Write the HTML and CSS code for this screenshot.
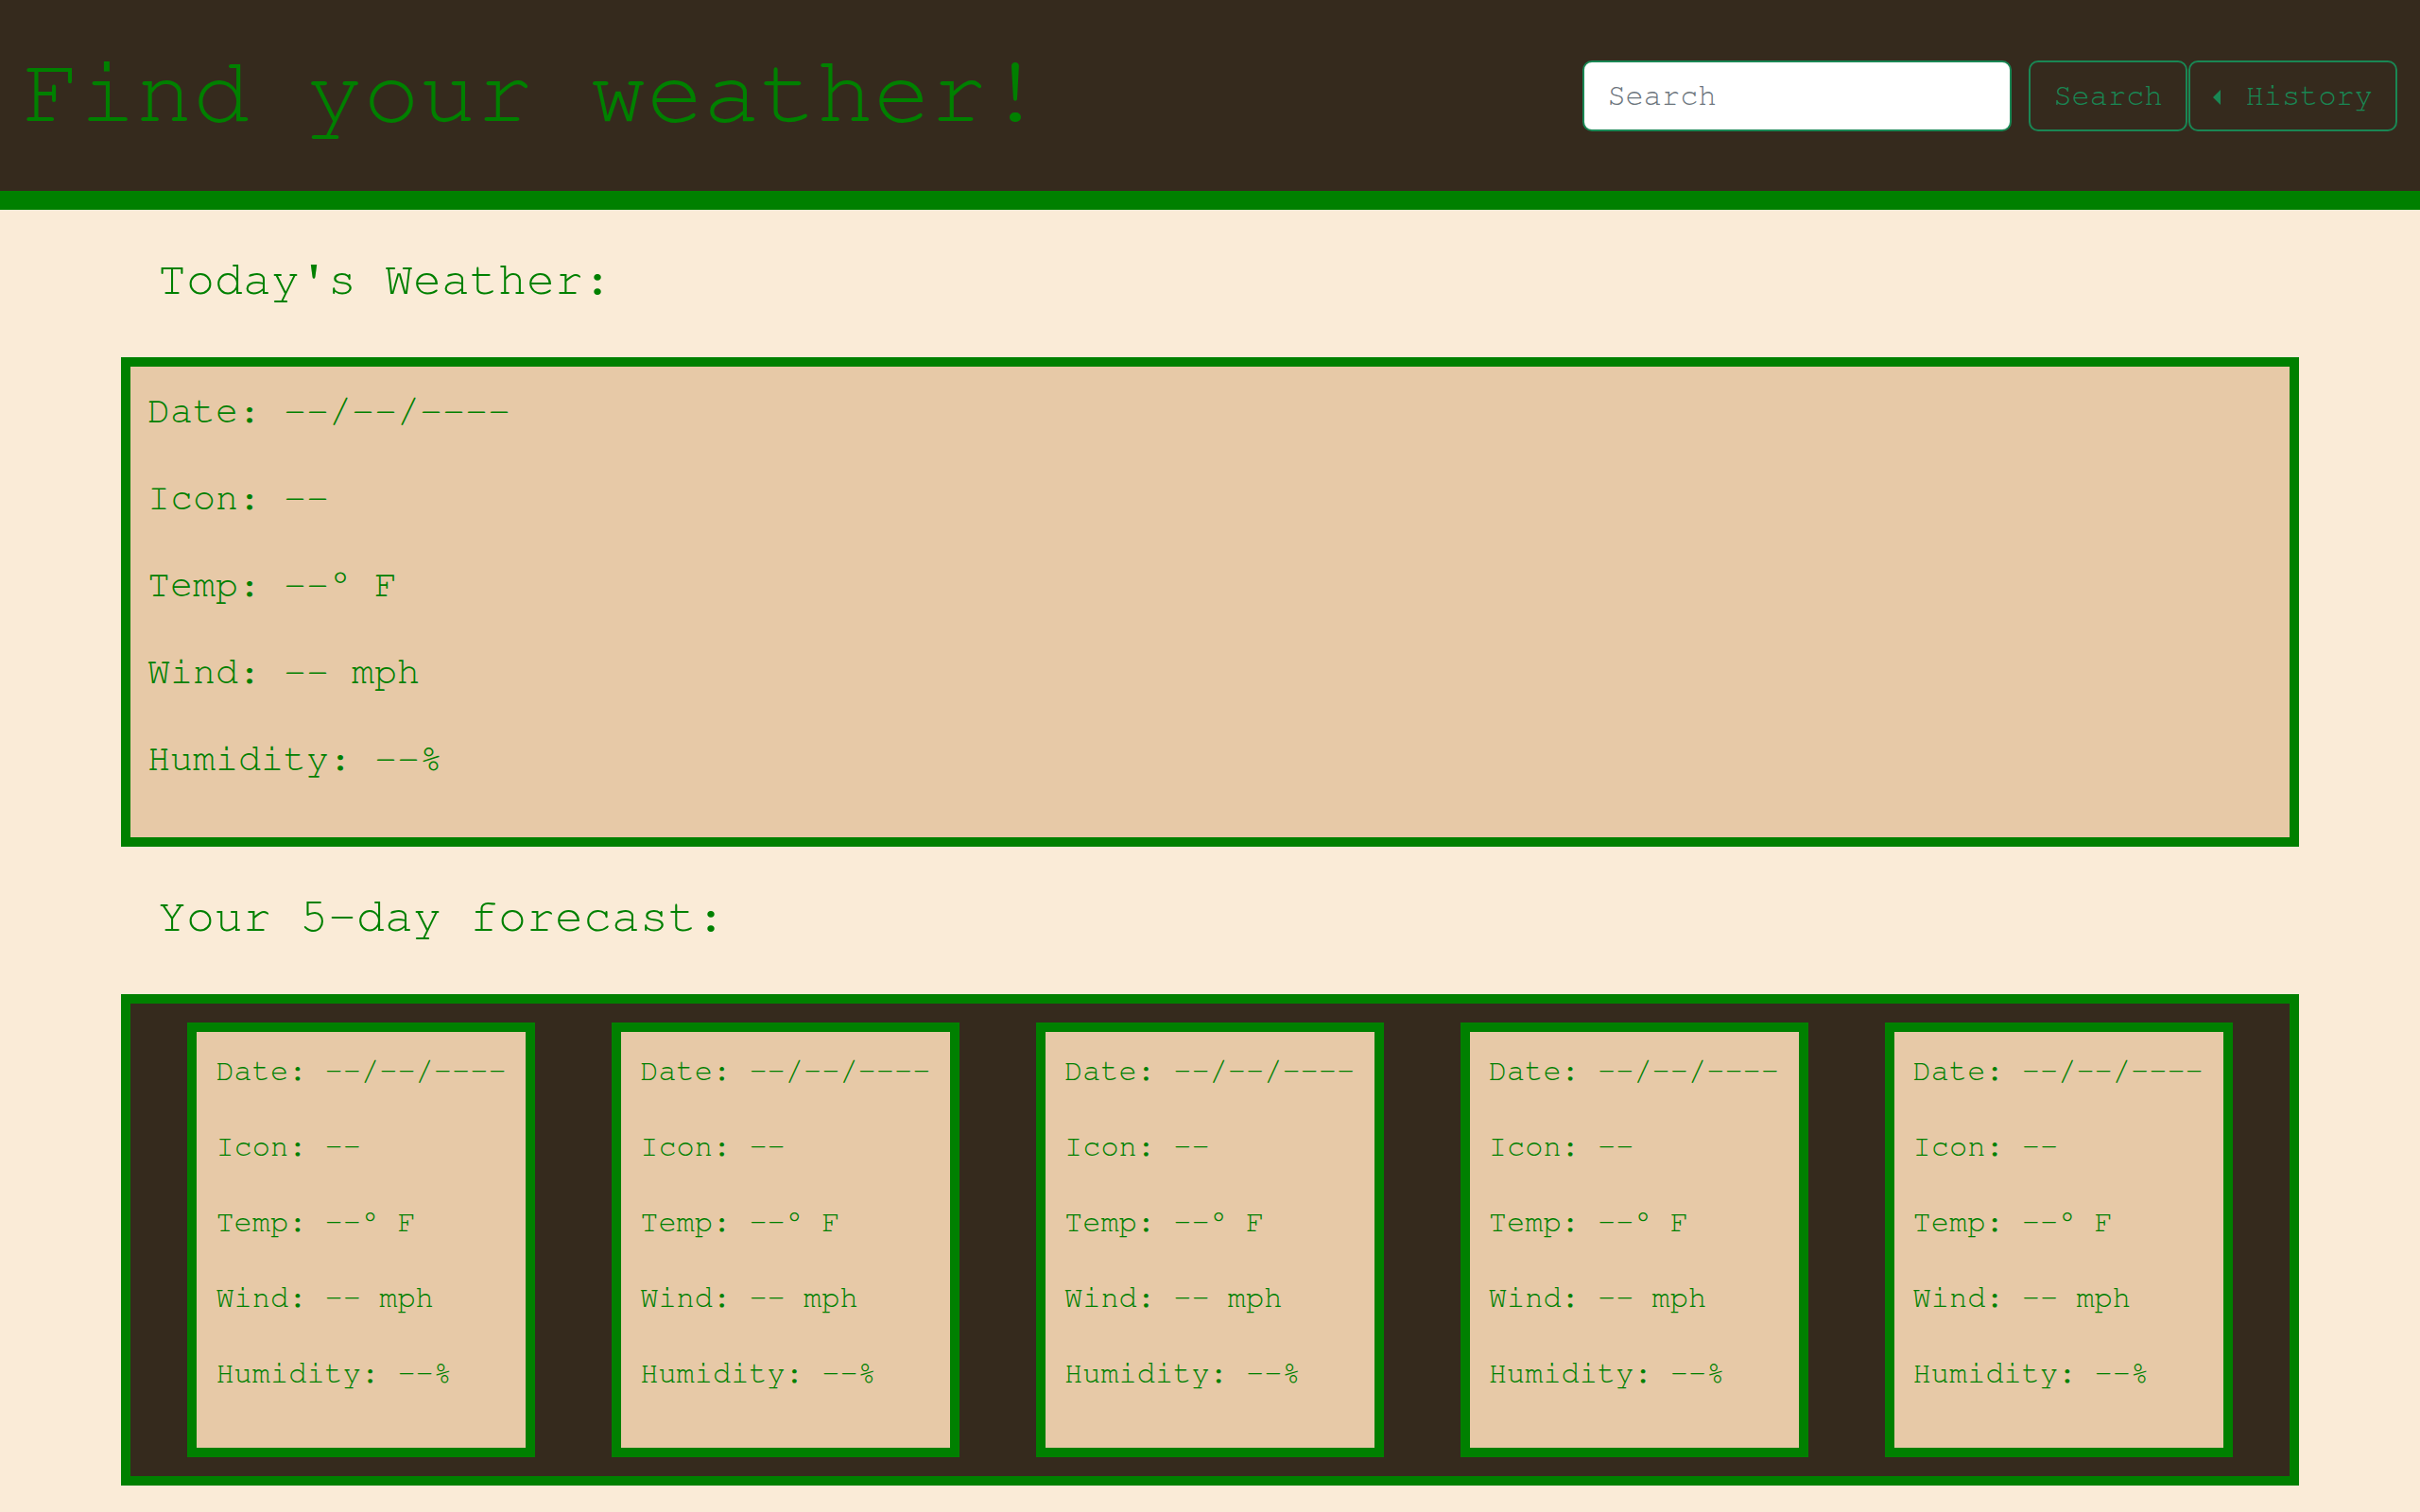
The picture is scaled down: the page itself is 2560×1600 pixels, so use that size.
FILE: index.html
```html
<!DOCTYPE html>
<html lang="en">
<head>
<meta charset="utf-8">
<title>Weather Dashboard</title>
<link rel="stylesheet" href="styles.css">
</head>
<body>
<header class="topbar">
  <h1 class="title">Find your weather!</h1>
  <form class="search-form">
    <input class="search-input" type="text" placeholder="Search">
    <button class="btn" type="button">Search</button>
    <button class="btn btn-history" type="button"><span class="caret"></span>History</button>
  </form>
</header>
<main class="main">
  <h2 class="section-title">Today's Weather:</h2>
  <section class="today">
    <p>Date: --/--/----</p>
    <p>Icon: --</p>
    <p>Temp: --° F</p>
    <p>Wind: -- mph</p>
    <p>Humidity: --%</p>
  </section>
  <h2 class="section-title">Your 5-day forecast:</h2>
  <section class="forecast">
    <div class="day">
      <p>Date: --/--/----</p><p>Icon: --</p><p>Temp: --° F</p><p>Wind: -- mph</p><p>Humidity: --%</p>
    </div>
    <div class="day">
      <p>Date: --/--/----</p><p>Icon: --</p><p>Temp: --° F</p><p>Wind: -- mph</p><p>Humidity: --%</p>
    </div>
    <div class="day">
      <p>Date: --/--/----</p><p>Icon: --</p><p>Temp: --° F</p><p>Wind: -- mph</p><p>Humidity: --%</p>
    </div>
    <div class="day">
      <p>Date: --/--/----</p><p>Icon: --</p><p>Temp: --° F</p><p>Wind: -- mph</p><p>Humidity: --%</p>
    </div>
    <div class="day">
      <p>Date: --/--/----</p><p>Icon: --</p><p>Temp: --° F</p><p>Wind: -- mph</p><p>Humidity: --%</p>
    </div>
  </section>
</main>
</body>
</html>
```
FILE: styles.css
```css
* { box-sizing: border-box; }

html, body {
  margin: 0;
  padding: 0;
}

body {
  background: #faebd7;
  font-family: "Nimbus Mono PS", "Nimbus Mono L", "FreeMono", "Courier 10 Pitch", "Courier", "Liberation Mono", monospace;
  font-size: 32px;
  line-height: 1.5;
  color: #008000;
}

.topbar {
  background: #352a1d;
  height: 222px;
  border-bottom: 20px solid #008000;
  display: flex;
  align-items: center;
  justify-content: space-between;
  padding: 0 24px;
}

.title {
  margin: 0 0 6px;
  font-size: 100px;
  font-weight: normal;
  line-height: 1.2;
  color: #008000;
}

.search-form {
  display: flex;
  align-items: center;
}

.search-input {
  width: 454px;
  height: 75px;
  border: 2px solid #198754;
  border-radius: 10px;
  background: #fff;
  padding: 0 24px;
  font-family: inherit;
  font-size: 32px;
  color: #212529;
  margin-right: 18px;
  outline: none;
}

.search-input::placeholder {
  color: #6c757d;
}

.btn {
  height: 75px;
  border: 2px solid #198754;
  border-radius: 10px;
  background: transparent;
  color: #198754;
  font-family: inherit;
  font-size: 32px;
  padding: 0 24px;
  margin: 0 1px 0 0;
  display: inline-flex;
  align-items: center;
  cursor: pointer;
}

.btn-history {
  margin-right: 0;
}

.caret {
  width: 0;
  height: 0;
  border-top: 8px solid transparent;
  border-bottom: 8px solid transparent;
  border-right: 8px solid #198754;
  margin-right: 27px;
  margin-top: 3px;
}

.main {
  width: 90%;
  margin: 0 auto;
}

.section-title {
  margin: 44px 0 52px;
  padding-left: 39px;
  font-size: 50px;
  font-weight: normal;
  line-height: 1.2;
  color: #008000;
}

.today {
  border: 10px solid #008000;
  background: #e7c9a7;
  padding: 17px 18px 21px;
}

.today p {
  margin: 0 0 32px;
  font-size: 40px;
  line-height: 1.5;
}

.forecast {
  border: 10px solid #008000;
  background: #352a1d;
  padding: 20px;
  display: flex;
  justify-content: space-around;
}

.day {
  width: 368px;
  border: 10px solid #008000;
  background: #e7c9a7;
  padding: 17px 20px 23px;
}

.day p {
  margin: 0 0 32px;
  font-size: 32px;
  line-height: 1.5;
}
```
